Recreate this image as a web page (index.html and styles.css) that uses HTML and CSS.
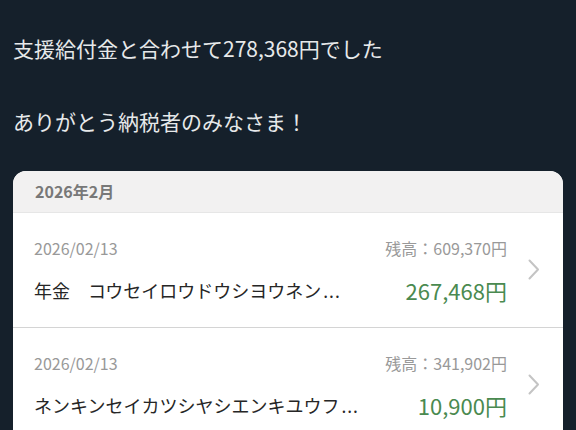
FILE: index.html
```html
<!DOCTYPE html>
<html lang="ja">
<head>
<meta charset="utf-8">
<link rel="stylesheet" href="styles.css">
</head>
<body>
<div class="post">
  <p class="post-line">支援給付金と合わせて278,368円でした</p>
  <p class="post-line blank">&nbsp;</p>
  <p class="post-line">ありがとう納税者のみなさま！</p>
</div>
<div class="card">
  <div class="card-header">2026年2月</div>
  <div class="row">
    <div class="row-main">
      <div class="row-top">
        <span class="date">2026/02/13</span>
        <span class="balance">残高：609,370円</span>
      </div>
      <div class="row-bottom">
        <span class="title">年金　コウセイロウドウシヨウネン<span class="ell">...</span></span>
        <span class="amount">267,468円</span>
      </div>
    </div>
    <svg class="chev" width="12" height="21" viewBox="0 0 12 21"><path d="M1.5 1.5 L10 10.5 L1.5 19.5" fill="none" stroke="#c4c4c4" stroke-width="2" stroke-linecap="round" stroke-linejoin="round"/></svg>
  </div>
  <div class="row">
    <div class="row-main">
      <div class="row-top">
        <span class="date">2026/02/13</span>
        <span class="balance">残高：341,902円</span>
      </div>
      <div class="row-bottom">
        <span class="title">ネンキンセイカツシヤシエンキユウフ<span class="ell">...</span></span>
        <span class="amount">10,900円</span>
      </div>
    </div>
    <svg class="chev" width="12" height="21" viewBox="0 0 12 21"><path d="M1.5 1.5 L10 10.5 L1.5 19.5" fill="none" stroke="#c4c4c4" stroke-width="2" stroke-linecap="round" stroke-linejoin="round"/></svg>
  </div>
</div>
</body>
</html>
```

FILE: styles.css
```css
html, body {
  margin: 0;
  padding: 0;
}
body {
  background: #15202b;
  font-family: "Noto Sans CJK JP", "Noto Sans", sans-serif;
  width: 576px;
  height: 430px;
  overflow: hidden;
  padding: 30px 13px 0 13px;
  box-sizing: border-box;
}
.post {
  color: #e7e9ea;
  font-size: 21px;
}
.post-line {
  margin: 0;
  line-height: 36.5px;
  height: 36.5px;
  white-space: nowrap;
}
.card {
  margin-top: 31px;
  width: 550px;
  background: #ffffff;
  border-radius: 13px;
  overflow: hidden;
}
.card-header {
  background: #f2f1f1;
  height: 41px;
  line-height: 40px;
  padding-left: 22px;
  font-size: 16px;
  font-weight: 700;
  color: #787878;
  border-bottom: 1px solid #e6e6e6;
}
.row {
  display: flex;
  align-items: center;
  height: 114px;
  padding: 0 23px 0 21px;
  border-bottom: 1px solid #d4d4d4;
}
.row-main {
  flex: 1;
  display: flex;
  flex-direction: column;
  gap: 15px;
  padding-top: 1px;
  min-width: 0;
}
.row-top {
  display: flex;
  justify-content: space-between;
  align-items: center;
  height: 24px;
  font-size: 16px;
  color: #999999;
}
.row-bottom {
  display: flex;
  justify-content: space-between;
  align-items: center;
  height: 30px;
}
.title {
  font-size: 18px;
  color: #262626;
  white-space: nowrap;
  overflow: hidden;
}
.ell {
  font-family: "Noto Sans", sans-serif;
  letter-spacing: 1px;
  margin-left: 2px;
}
.amount {
  font-size: 22px;
  color: #4a8a50;
  white-space: nowrap;
}
.chev {
  flex: none;
  margin-left: 21px;
}
```
